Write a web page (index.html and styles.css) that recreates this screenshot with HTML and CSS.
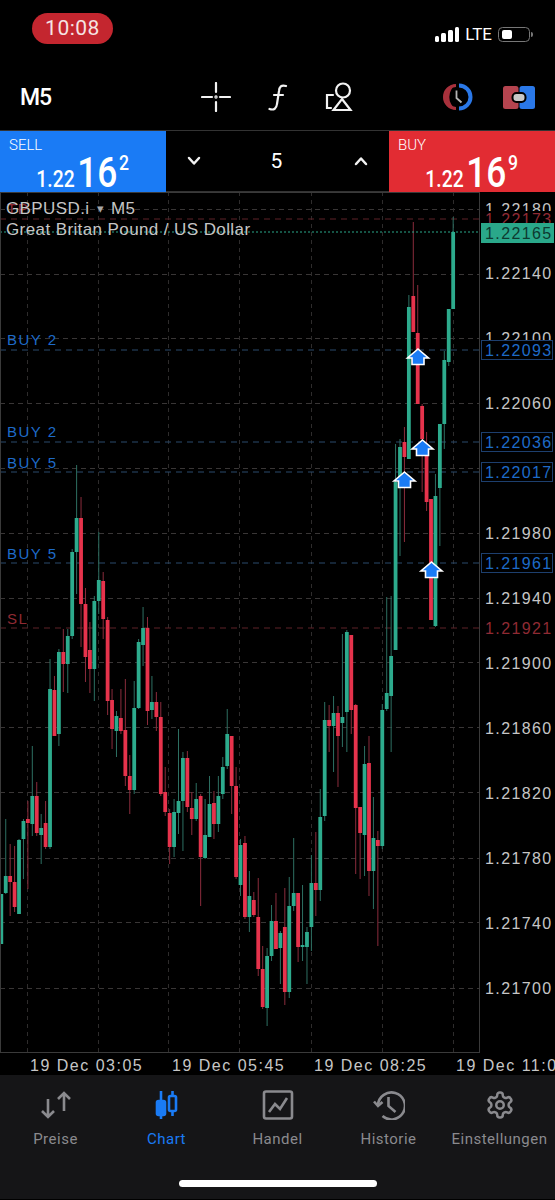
FILE: index.html
```html
<!DOCTYPE html>
<html lang="de">
<head>
    <meta charset="UTF-8">
    <meta name="viewport" content="width=device-width, initial-scale=1.0">
    <title>GBPUSD.i M5</title>
    <link rel="stylesheet" href="styles.css">
</head>
<body>
    <div class="status-bar">
        <div class="clock-pill">10:08</div>
        <div class="status-right">
            <div class="signal"><span class="bar-1"></span><span class="bar-2"></span><span class="bar-3"></span><span class="bar-4"></span></div>
            <div class="network">LTE</div>
            <div class="battery"><span class="battery-level"></span></div>
        </div>
    </div>

    <div class="toolbar">
        <div class="period">M5</div>
        <div class="tools">
            <svg class="tool-cross" width="30" height="30" viewBox="0 0 30 30">
                <path d="M1 15H11M19 15H29M15 1V10M15 20V29" />
                <circle cx="15" cy="15" r="0.6" />
            </svg>
            <svg class="tool-func" width="20" height="27" viewBox="0 0 20 27">
                <path d="M18 2C13 0.5 11.5 3 11 7L9 20C8.5 24.5 6 26.5 1.5 25M6 11H15" />
            </svg>
            <svg class="tool-objects" width="28" height="30" viewBox="0 0 28 30">
                <circle cx="18" cy="8.5" r="7" />
                <path d="M17 17L25.5 28H8.5Z" />
                <path d="M8 13H2V26H6" />
            </svg>
        </div>
        <div class="toolbar-right">
            <svg width="31" height="28" viewBox="0 0 31 28">
                <path class="clock-red" d="M14 1.5A12.5 12.5 0 0 0 14 26.5A15 15 0 0 1 14 1.5Z" />
                <path class="clock-blue" d="M17 2.5A11.5 11.5 0 0 1 17 25.5" />
                <path class="clock-red-line" d="M14 2.5A11.5 11.5 0 0 0 14 25.5" />
                <path class="clock-hands" d="M14.5 7.5V15L19.5 19.5" />
            </svg>
            <svg width="32" height="23" viewBox="0 0 32 23">
                <rect class="order-red" x="0" y="0" width="15.5" height="23" rx="2.5" />
                <rect class="order-blue" x="16.5" y="0" width="15.5" height="23" rx="2.5" />
                <rect class="order-pill" x="9.5" y="7" width="13" height="9" rx="4" />
            </svg>
        </div>
    </div>

    <div class="trade-bar">
        <div class="quote sell">
            <div class="quote-label">SELL</div>
            <div class="quote-price"><span class="price-small">1.22</span><span class="price-big">16</span><span class="price-sup">2</span></div>
        </div>
        <div class="volume">
            <svg width="14" height="10" viewBox="0 0 14 10"><path d="M2 2L7 7.5L12 2" /></svg>
            <span class="volume-value">5</span>
            <svg width="14" height="10" viewBox="0 0 14 10"><path d="M2 8L7 2.5L12 8" /></svg>
        </div>
        <div class="quote buy">
            <div class="quote-label">BUY</div>
            <div class="quote-price"><span class="price-small">1.22</span><span class="price-big">16</span><span class="price-sup">9</span></div>
        </div>
    </div>

    <svg class="chart" width="555" height="883" viewBox="0 193 555 883">
        <g id="grid"></g>
        <line class="level-red" x1="0" y1="220" x2="479" y2="220" />
        <line class="level-blue" x1="0" y1="351" x2="479" y2="351" />
        <line class="level-blue" x1="0" y1="443" x2="479" y2="443" />
        <line class="level-blue" x1="0" y1="473" x2="479" y2="473" />
        <line class="level-blue" x1="0" y1="564" x2="479" y2="564" />
        <line class="level-red" x1="0" y1="629" x2="479" y2="629" />
        <g id="candles"></g>
        <line class="level-last" x1="0" y1="233" x2="479" y2="233" />
        <g id="arrows"></g>
        <rect class="frame" x="0.5" y="193.5" width="479" height="860" />

        <text class="order-text red-text" x="7" y="215">TP</text>
        <text class="legend" x="6" y="215">GBPUSD.i</text>
        <text class="legend legend-small" x="97" y="214">▾</text>
        <text class="legend" x="111" y="215">M5</text>
        <text class="legend" x="6" y="236">Great Britan Pound / US Dollar</text>

        <text class="order-text blue-text" x="7" y="346">BUY 2</text>
        <text class="order-text blue-text" x="7" y="438">BUY 2</text>
        <text class="order-text blue-text" x="7" y="469">BUY 5</text>
        <text class="order-text blue-text" x="7" y="560">BUY 5</text>
        <text class="order-text red-text" x="7" y="625">SL</text>

        <text class="price" x="485" y="216">1.22180</text>
        <rect class="price-mask" x="481" y="212" width="74" height="14" />
        <text class="price red-text" x="485" y="226">1.22173</text>
        <rect class="price-last" x="481" y="224" width="73" height="20" />
        <text class="price price-last-text" x="485" y="240">1.22165</text>
        <text class="price" x="485" y="280">1.22140</text>
        <text class="price" x="485" y="345">1.22100</text>
        <rect class="price-box" x="481.5" y="341.5" width="71" height="19" />
        <text class="price blue-text" x="485" y="357">1.22093</text>
        <text class="price" x="485" y="410">1.22060</text>
        <rect class="price-box" x="481.5" y="433.5" width="71" height="19" />
        <text class="price blue-text" x="485" y="449">1.22036</text>
        <rect class="price-box" x="481.5" y="463.5" width="71" height="19" />
        <text class="price blue-text" x="485" y="479">1.22017</text>
        <text class="price" x="485" y="540">1.21980</text>
        <rect class="price-box" x="481.5" y="554.5" width="71" height="19" />
        <text class="price blue-text" x="485" y="570">1.21961</text>
        <text class="price" x="485" y="605">1.21940</text>
        <text class="price red-text" x="485" y="635">1.21921</text>
        <text class="price" x="485" y="670">1.21900</text>
        <text class="price" x="485" y="735">1.21860</text>
        <text class="price" x="485" y="800">1.21820</text>
        <text class="price" x="485" y="865">1.21780</text>
        <text class="price" x="485" y="930">1.21740</text>
        <text class="price" x="485" y="995">1.21700</text>

        <text class="time" x="30" y="1072">19 Dec 03:05</text>
        <text class="time" x="172" y="1072">19 Dec 05:45</text>
        <text class="time" x="314" y="1072">19 Dec 08:25</text>
        <text class="time" x="456" y="1072">19 Dec 11:05</text>
    </svg>

    <div class="tab-bar">
        <div class="tabs">
            <div class="tab">
                <svg width="32" height="30" viewBox="0 0 32 30">
                    <path d="M8 9V27M2 21L8 27L14 21M24 3V21M18 9L24 3L30 9" />
                </svg>
                <span>Preise</span>
            </div>
            <div class="tab active">
                <svg width="24" height="30" viewBox="0 0 24 30">
                    <path class="solid" d="M6 1V29" />
                    <rect class="solid" x="2" y="11" width="8" height="14" rx="1.5" />
                    <path d="M17.5 1V6M17.5 21V26" />
                    <rect x="14" y="6" width="7" height="15" rx="1.5" />
                </svg>
                <span>Chart</span>
            </div>
            <div class="tab">
                <svg width="32" height="30" viewBox="0 0 32 30">
                    <rect x="2" y="1.5" width="28" height="27" rx="2" />
                    <path d="M7 22L13 14L18 19L25 8" />
                </svg>
                <span>Handel</span>
            </div>
            <div class="tab">
                <svg width="32" height="30" viewBox="0 0 32 30">
                    <path d="M5 15A13.5 13.5 0 1 1 9.5 26" />
                    <path d="M1 11.5L5 16L9.5 12" />
                    <path d="M15.5 7V16L22.5 22" />
                </svg>
                <span>Historie</span>
            </div>
            <div class="tab">
                <svg width="30" height="30" viewBox="0 0 24 24">
                    <path class="gear" d="M12.22 2h-.44a2 2 0 0 0-2 2v.18a2 2 0 0 1-1 1.73l-.43.25a2 2 0 0 1-2 0l-.15-.08a2 2 0 0 0-2.73.73l-.22.38a2 2 0 0 0 .73 2.73l.15.1a2 2 0 0 1 1 1.72v.51a2 2 0 0 1-1 1.74l-.15.09a2 2 0 0 0-.73 2.73l.22.38a2 2 0 0 0 2.73.73l.15-.08a2 2 0 0 1 2 0l.43.25a2 2 0 0 1 1 1.73V20a2 2 0 0 0 2 2h.44a2 2 0 0 0 2-2v-.18a2 2 0 0 1 1-1.73l.43-.25a2 2 0 0 1 2 0l.15.08a2 2 0 0 0 2.73-.73l.22-.39a2 2 0 0 0-.73-2.73l-.15-.08a2 2 0 0 1-1-1.74v-.5a2 2 0 0 1 1-1.74l.15-.09a2 2 0 0 0 .73-2.73l-.22-.38a2 2 0 0 0-2.73-.73l-.15.08a2 2 0 0 1-2 0l-.43-.25a2 2 0 0 1-1-1.73V4a2 2 0 0 0-2-2z" />
                    <circle class="gear" cx="12" cy="12" r="3" />
                </svg>
                <span>Einstellungen</span>
            </div>
        </div>
        <div class="home-indicator"></div>
    </div>

    <script src="script.js"></script>
</body>
</html>
```

FILE: styles.css
```css
body {
    margin: 0;
    padding: 0;
    width: 555px;
    height: 1200px;
    overflow: hidden;
    background-color: #000;
    color: #fff;
    font-family: Roboto, "Liberation Sans", sans-serif;
}

svg {
    display: block;
}

/* status bar */
.status-bar {
    height: 60px;
    box-sizing: border-box;
    padding: 13px 25px 0 32px;
    display: flex;
    justify-content: space-between;
    align-items: flex-start;
}
.clock-pill {
    width: 81px;
    height: 31px;
    line-height: 31px;
    border-radius: 16px;
    background-color: #c4262f;
    color: #f5e3e3;
    font-size: 21px;
    text-align: center;
    letter-spacing: 0.5px;
}
.status-right {
    display: flex;
    align-items: flex-end;
    margin-top: 14px;
    height: 15px;
}
.signal {
    display: flex;
    align-items: flex-end;
    gap: 2px;
    margin-right: 6px;
}
.signal span {
    display: block;
    width: 4.7px;
    background-color: #fff;
    border-radius: 1.5px;
}
.bar-1 { height: 6px; }
.bar-2 { height: 9px; }
.bar-3 { height: 12px; }
.bar-4 { height: 15px; }
.network {
    font-size: 17px;
    line-height: 15px;
    margin-right: 6px;
}
.battery {
    width: 32px;
    height: 15px;
    box-sizing: border-box;
    border: 1px solid #777;
    border-radius: 4.5px;
    padding: 2px 3px;
    position: relative;
}
.battery::after {
    content: "";
    position: absolute;
    right: -4px;
    top: 4px;
    width: 2px;
    height: 5px;
    background-color: #777;
    border-radius: 0 2px 2px 0;
}
.battery-level {
    display: block;
    width: 10px;
    height: 9px;
    background-color: #fff;
    border-radius: 2px;
}

/* toolbar */
.toolbar {
    height: 71px;
    box-sizing: border-box;
    padding: 4px 20px 0;
    display: flex;
    align-items: center;
    position: relative;
    border-bottom: 1px solid #333;
}
.period {
    font-size: 23px;
    font-weight: 500;
    width: 181px;
    letter-spacing: -1px;
}
.tools {
    display: flex;
    align-items: center;
    width: 241px;
    gap: 37px;
}
.tools path,
.tools circle {
    fill: none;
    stroke: #f2f2f2;
    stroke-width: 2.2;
    stroke-linecap: round;
}
.toolbar-right {
    display: flex;
    align-items: center;
    gap: 30px;
}
.clock-red {
    fill: #a8313c;
}
.clock-red-line {
    fill: none;
    stroke: #a8313c;
    stroke-width: 3;
}
.clock-blue {
    fill: none;
    stroke: #2a78e8;
    stroke-width: 4;
}
.clock-hands {
    fill: none;
    stroke: #b5b5b5;
    stroke-width: 1.8;
}
.order-red {
    fill: #b5444f;
}
.order-blue {
    fill: #2a78e8;
}
.order-pill {
    fill: #c8c8c8;
    stroke: #000;
    stroke-width: 2;
}

/* sell / buy */
.trade-bar {
    height: 61px;
    display: flex;
}
.quote {
    width: 166px;
    box-sizing: border-box;
    padding: 6px 0 0 9px;
    position: relative;
}
.sell {
    background-color: #1a7bf5;
}
.buy {
    background-color: #e22c33;
}
.quote-label {
    font-size: 15px;
    line-height: 16px;
    font-weight: 300;
}
.quote-price {
    display: flex;
    align-items: flex-end;
    justify-content: flex-end;
    margin-right: 37px;
    height: 39px;
    font-weight: 500;
    transform: scaleX(0.84);
    transform-origin: right center;
}
.price-small {
    font-size: 23px;
    line-height: 25px;
    margin-right: 3px;
}
.price-big {
    font-size: 42px;
    line-height: 39px;
    height: 39px;
}
.price-sup {
    font-size: 21px;
    line-height: 21px;
    align-self: flex-start;
    margin-left: 2px;
}
.volume {
    flex: 1;
    display: flex;
    align-items: center;
    justify-content: space-between;
    padding: 0 21px;
    margin-top: -1px;
    border-bottom: 1px solid #333;
}
.volume path {
    fill: none;
    stroke: #f2f2f2;
    stroke-width: 2.5;
    stroke-linecap: round;
    stroke-linejoin: round;
}
.volume-value {
    font-size: 21px;
    margin-right: 2px;
}

/* chart */
.chart {
    font-family: "Liberation Sans", sans-serif;
}
.grid-line {
    stroke: #393636;
    stroke-width: 1;
    stroke-dasharray: 5 4;
}
.grid-line-v {
    stroke: #2e2c2c;
    stroke-width: 1;
    stroke-dasharray: 4 4;
}
.frame {
    fill: none;
    stroke: #3a3a3a;
    stroke-width: 1;
}
.level-red {
    stroke: #5f2329;
    stroke-dasharray: 6 5;
}
.level-blue {
    stroke: #2b4a6c;
    stroke-dasharray: 6 5;
}
.level-last {
    stroke: #2aa88a;
    stroke-dasharray: 2 2;
}
.wick-g {
    fill: #2d6f62;
}
.wick-r {
    fill: #8a2c3c;
}
.body-g {
    fill: #2dab8d;
}
.body-r {
    fill: #e6334c;
}
.trade-arrow {
    fill: #1a7bf5;
    stroke: #fff;
    stroke-width: 1.6;
    stroke-linejoin: miter;
}
.legend {
    font-size: 17px;
    letter-spacing: 0.4px;
    fill: #c6c6c6;
}
.legend-small {
    font-size: 13px;
    fill: #a8a8a8;
}
.order-text {
    font-size: 15px;
    letter-spacing: 1.5px;
}
.price {
    font-size: 16px;
    letter-spacing: 1.4px;
    fill: #c6c6c6;
}
.blue-text {
    fill: #1e6bc8;
}
.red-text {
    fill: #8f2a33;
}
.price-mask {
    fill: #000;
}
.price-last {
    fill: #2aa88a;
}
.price-last-text {
    fill: #0d3a30;
}
.price-box {
    fill: #000;
    stroke: #1d3f6e;
    stroke-width: 1;
}
.time {
    font-size: 16px;
    letter-spacing: 1.5px;
    fill: #c6c6c6;
}

/* bottom tabs */
.tab-bar {
    height: 124px;
    box-sizing: border-box;
    background-color: #151517;
    padding-top: 15px;
    position: relative;
}
.tabs {
    display: flex;
}
.tab {
    width: 111px;
    display: flex;
    flex-direction: column;
    align-items: center;
    color: #8a8a8e;
    font-size: 15px;
    line-height: 18px;
    letter-spacing: 0.5px;
    gap: 10px;
}
.tab svg {
    height: 30px;
}
.tab path,
.tab rect,
.tab circle {
    fill: none;
    stroke: #8a8a8e;
    stroke-width: 2.6;
}
.tab .gear {
    stroke-width: 2;
}
.tab.active {
    color: #1a7bf5;
}
.tab.active path,
.tab.active rect {
    stroke: #1a7bf5;
}
.tab.active .solid {
    fill: #1a7bf5;
}
.home-indicator {
    position: absolute;
    left: 179px;
    bottom: 12px;
    width: 198px;
    height: 7px;
    border-radius: 4px;
    background-color: #fff;
}
```

FILE: script.js
```js
// top wick, bottom wick, body top, body bottom, colour
const candles = [
    [895, 945, 895, 945, "g"], [820, 895, 877, 894, "g"], [845, 917, 877, 883, "r"], [847, 913, 883, 908, "r"],
    [840, 915, 841, 915, "g"], [820, 880, 822, 840, "g"], [802, 890, 820, 824, "r"], [747, 837, 797, 825, "g"],
    [783, 837, 797, 834, "r"], [815, 865, 829, 836, "g"], [802, 850, 824, 848, "r"], [660, 850, 690, 848, "g"],
    [677, 737, 691, 737, "r"], [650, 747, 653, 735, "g"], [630, 693, 653, 665, "r"], [630, 694, 637, 665, "g"],
    [550, 640, 553, 637, "g"], [466, 595, 519, 553, "g"], [498, 648, 519, 605, "r"], [589, 683, 605, 658, "r"],
    [623, 694, 651, 670, "r"], [597, 702, 602, 670, "g"], [533, 615, 581, 602, "g"], [573, 640, 582, 620, "r"],
    [618, 716, 621, 702, "r"], [690, 750, 701, 730, "r"], [712, 758, 717, 732, "g"], [690, 735, 719, 732, "r"],
    [680, 787, 731, 777, "r"], [756, 815, 777, 791, "r"], [682, 795, 709, 791, "g"], [640, 710, 643, 709, "g"],
    [608, 667, 629, 646, "g"], [618, 726, 629, 712, "r"], [677, 720, 703, 711, "g"], [693, 732, 703, 718, "r"],
    [703, 797, 718, 795, "r"], [768, 817, 793, 813, "r"], [810, 865, 814, 848, "r"], [800, 858, 813, 848, "g"],
    [730, 835, 802, 814, "g"], [753, 852, 759, 802, "g"], [752, 813, 759, 808, "r"], [793, 836, 809, 820, "r"],
    [784, 822, 800, 820, "g"], [795, 907, 797, 858, "r"], [800, 860, 836, 859, "g"], [777, 838, 805, 838, "g"],
    [792, 840, 804, 825, "r"], [777, 833, 797, 825, "g"], [758, 800, 768, 795, "g"], [710, 770, 735, 767, "g"],
    [737, 815, 737, 787, "r"], [768, 880, 787, 878, "r"], [840, 897, 846, 886, "g"], [837, 920, 844, 918, "r"],
    [872, 933, 897, 918, "g"], [893, 918, 901, 916, "r"], [879, 977, 918, 970, "r"], [947, 1010, 970, 1008, "r"],
    [949, 1027, 957, 1009, "g"], [906, 962, 922, 957, "g"], [894, 950, 922, 950, "r"], [932, 985, 934, 949, "g"],
    [889, 1006, 928, 993, "r"], [878, 999, 907, 993, "g"], [839, 912, 894, 907, "g"], [894, 963, 894, 948, "r"],
    [886, 962, 946, 948, "g"], [928, 985, 933, 948, "g"], [856, 952, 884, 928, "g"], [833, 917, 884, 891, "r"],
    [790, 902, 818, 891, "g"], [703, 822, 721, 817, "g"], [706, 753, 721, 727, "r"], [697, 773, 714, 727, "g"],
    [707, 788, 714, 737, "r"], [635, 748, 718, 724, "g"], [631, 753, 633, 713, "g"], [636, 735, 636, 711, "r"],
    [705, 875, 706, 809, "r"], [808, 880, 808, 834, "r"], [747, 877, 765, 836, "g"], [737, 897, 764, 872, "r"],
    [798, 910, 839, 872, "g"], [832, 947, 841, 847, "r"], [705, 850, 711, 847, "g"], [598, 712, 694, 710, "g"],
    [597, 753, 657, 697, "g"], [445, 651, 483, 651, "g"], [440, 557, 448, 480, "g"], [428, 543, 443, 458, "r"],
    [296, 460, 308, 460, "g"], [223, 333, 297, 333, "r"], [286, 405, 334, 405, "r"], [405, 493, 407, 440, "r"],
    [433, 512, 457, 503, "r"], [500, 621, 500, 621, "r"], [475, 628, 497, 627, "g"], [425, 547, 425, 489, "g"],
    [352, 450, 361, 425, "g"], [310, 367, 310, 363, "g"], [218, 310, 233, 310, "g"]
];

const gridRows = [210, 275, 339, 404, 469, 534, 599, 663, 728, 793, 859, 923, 989];
const gridCols = [27, 98, 168, 239, 311, 382, 453];
const arrows = [[418, 349], [422.5, 440], [404.5, 472], [431.5, 562]];

const svgNs = "http://www.w3.org/2000/svg";

function addShape(parent, tag, attrs) {
    const el = document.createElementNS(svgNs, tag);
    for (const name in attrs) {
        el.setAttribute(name, attrs[name]);
    }
    parent.appendChild(el);
}

const gridGroup = document.getElementById("grid");
gridRows.forEach((y) => {
    addShape(gridGroup, "line", { class: "grid-line", x1: 0, y1: y + 0.5, x2: 479, y2: y + 0.5 });
});
gridCols.forEach((x) => {
    addShape(gridGroup, "line", { class: "grid-line-v", x1: x + 0.5, y1: 193, x2: x + 0.5, y2: 1053 });
});

const candleGroup = document.getElementById("candles");
candles.forEach((c, i) => {
    const x = 1.3 + i * 4.43;
    addShape(candleGroup, "rect", { class: "wick-" + c[4], x: x - 0.5, y: c[0], width: 1, height: c[1] - c[0] });
    addShape(candleGroup, "rect", { class: "body-" + c[4], x: x - 1.9, y: c[2], width: 3.8, height: c[3] - c[2] });
});

const arrowGroup = document.getElementById("arrows");
arrows.forEach((a) => {
    const cx = a[0];
    const t = a[1] + 1;
    const points = [
        [cx, t], [cx + 10.5, t + 9], [cx + 6, t + 9], [cx + 6, t + 15.5],
        [cx - 6, t + 15.5], [cx - 6, t + 9], [cx - 10.5, t + 9]
    ];
    addShape(arrowGroup, "polygon", { class: "trade-arrow", points: points.join(" ") });
});
```
